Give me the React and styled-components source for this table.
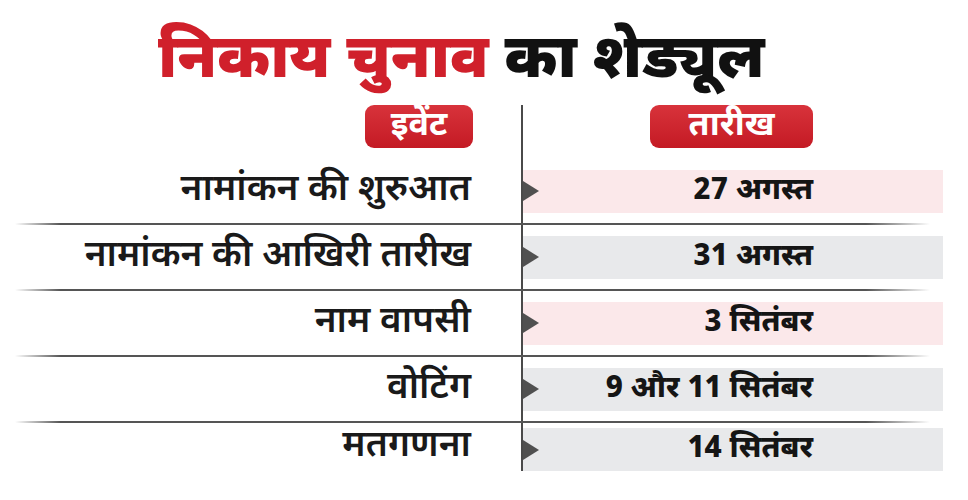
import React from "react";
import styled, { createGlobalStyle } from "styled-components";

const GlobalStyle = createGlobalStyle`
  html, body { margin: 0; padding: 0; background: #ffffff; }
  body { font-family: "Noto Sans Devanagari", "Noto Sans", "DejaVu Sans", sans-serif; }
`;

const Page = styled.div`
  width: 968px;
  height: 500px;
  background: #ffffff;
  box-sizing: border-box;
  padding-top: 24px;
  overflow: hidden;
`;

const Title = styled.h1`
  margin: 0;
  padding-left: 158px;
  font-size: 61px;
  line-height: 76px;
  font-weight: 900;
  color: #111111;
  white-space: nowrap;
`;

const Accent = styled.span`
  color: #d0202b;
`;

const Table = styled.div`
  display: flex;
  flex-direction: column;
  margin-top: 5px;
`;

const Row = styled.div`
  display: grid;
  grid-template-columns: 521px 1fr;
  height: ${(p) => p.$h}px;
`;

const LeftCell = styled.div`
  display: flex;
  align-items: center;
  justify-content: flex-end;
  padding-right: 50px;
  font-size: 37px;
  font-weight: 600;
  color: #1a1a1a;
  white-space: nowrap;
`;

const RightCell = styled.div`
  border-left: 2px solid #4a4a4a;
  display: flex;
  align-items: ${(p) => p.$align || "center"};
  padding-right: 25px;
`;

const HeaderLeftCell = styled(LeftCell)`
  align-items: flex-start;
  padding-right: 48px;
`;

const HeaderRightCell = styled(RightCell)`
  justify-content: flex-end;
  align-items: flex-start;
  padding-right: 155px;
`;

const Pill = styled.div`
  width: ${(p) => p.$w}px;
  height: 43px;
  border-radius: 9px;
  background: linear-gradient(#d8333b, #c41a24);
  color: #ffffff;
  font-size: 34px;
  font-weight: 700;
  display: flex;
  align-items: center;
  justify-content: center;
`;

const Bar = styled.div`
  flex: 1;
  height: 43px;
  background: ${(p) => (p.$pink ? "#fbe8ea" : "#e8e9eb")};
  display: flex;
  align-items: center;
`;

const Arrow = styled.span`
  width: 0;
  height: 0;
  border-top: 10px solid transparent;
  border-bottom: 10px solid transparent;
  border-left: 16px solid #505050;
`;

const DateText = styled.span`
  margin-left: auto;
  padding-right: 130px;
  font-size: 30px;
  font-weight: 800;
  color: #151515;
  white-space: nowrap;
`;

const Separator = styled.div`
  height: 2px;
  margin: 0 38px 0 15px;
  background: linear-gradient(
    to right,
    rgba(70, 70, 70, 0) 0%,
    #555555 5%,
    #555555 93%,
    rgba(70, 70, 70, 0) 100%
  );
`;

const rows = [
  { event: "नामांकन की शुरुआत", date: "27 अगस्त", pink: true },
  { event: "नामांकन की आखिरी तारीख", date: "31 अगस्त", pink: false },
  { event: "नाम वापसी", date: "3 सितंबर", pink: true },
  { event: "वोटिंग", date: "9 और 11 सितंबर", pink: false },
  { event: "मतगणना", date: "14 सितंबर", pink: false },
];

export default function App() {
  return (
    <>
      <GlobalStyle />
      <Page>
        <Title>
          <Accent>निकाय चुनाव</Accent> का शेड्यूल
        </Title>
        <Table>
          <Row $h={54}>
            <HeaderLeftCell>
              <Pill $w={108}>इवेंट</Pill>
            </HeaderLeftCell>
            <HeaderRightCell>
              <Pill $w={163}>तारीख</Pill>
            </HeaderRightCell>
          </Row>
          {rows.map((r, i) => {
            const last = i === rows.length - 1;
            return (
              <React.Fragment key={r.event}>
                <Row $h={last ? 47 : 64}>
                  <LeftCell>{r.event}</LeftCell>
                  <RightCell $align={last ? "flex-end" : "center"}>
                    <Bar $pink={r.pink}>
                      <Arrow />
                      <DateText>{r.date}</DateText>
                    </Bar>
                  </RightCell>
                </Row>
                {!last && <Separator />}
              </React.Fragment>
            );
          })}
        </Table>
      </Page>
    </>
  );
}
